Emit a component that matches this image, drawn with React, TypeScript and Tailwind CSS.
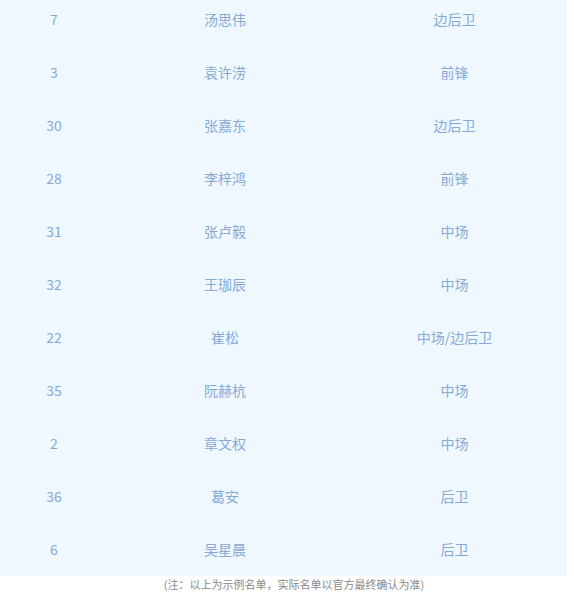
const players = [
  { no: '7', name: '汤思伟', pos: '边后卫' },
  { no: '3', name: '袁许涝', pos: '前锋' },
  { no: '30', name: '张嘉东', pos: '边后卫' },
  { no: '28', name: '李梓鸿', pos: '前锋' },
  { no: '31', name: '张卢毅', pos: '中场' },
  { no: '32', name: '王珈辰', pos: '中场' },
  { no: '22', name: '崔松', pos: '中场/边后卫' },
  { no: '35', name: '阮赫杭', pos: '中场' },
  { no: '2', name: '章文权', pos: '中场' },
  { no: '36', name: '葛安', pos: '后卫' },
  { no: '6', name: '吴星晨', pos: '后卫' },
];

export default function App() {
  return (
    <div
      className="w-[574px] h-[595px] overflow-hidden bg-white"
      style={{ fontFamily: '"Microsoft YaHei", "Noto Sans CJK SC", "Noto Sans", sans-serif' }}
    >
      {/* Roster table */}
      <div className="w-[567px] -mt-[7px] bg-[#eff8ff]">
        {players.map((p) => (
          <div key={p.no + p.name} className="flex h-[53px] items-center text-[14px] text-[#86a9d6]">
            <div className="w-[108px] text-center">{p.no}</div>
            <div className="w-[234px] text-center">{p.name}</div>
            <div className="flex-1 text-center">{p.pos}</div>
          </div>
        ))}
      </div>

      {/* Note */}
      <p className="mt-[1px] pl-[14px] text-center text-[11px] leading-[14px] text-[#8a8a8a]">
        (注：以上为示例名单，实际名单以官方最终确认为准)
      </p>
    </div>
  );
}
